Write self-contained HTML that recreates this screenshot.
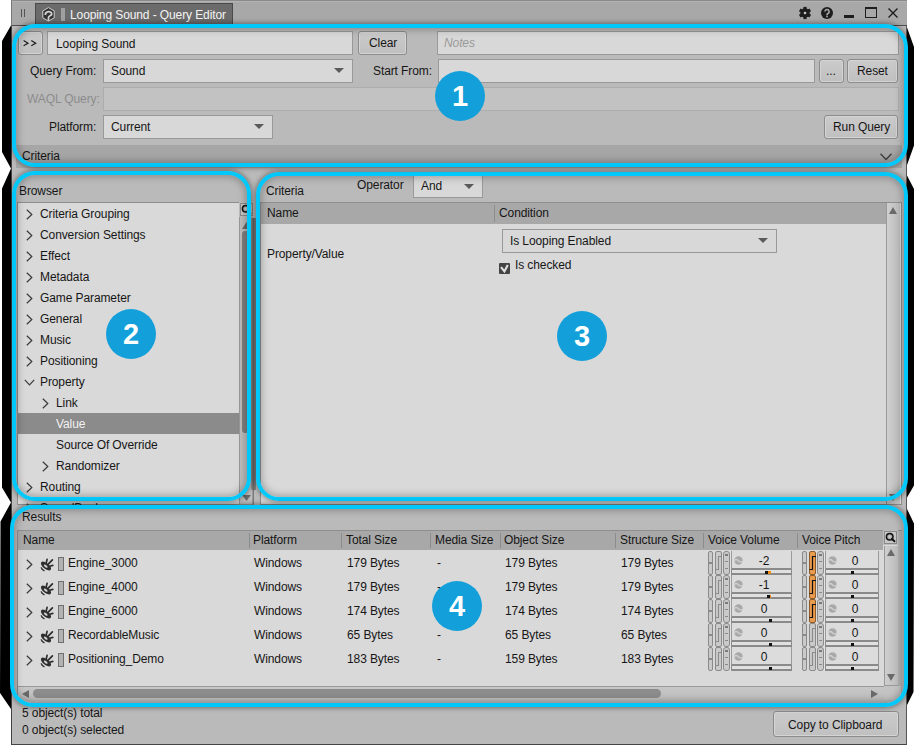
<!DOCTYPE html>
<html><head><meta charset="utf-8"><style>
*{box-sizing:border-box;margin:0;padding:0}
html,body{width:915px;height:745px;overflow:hidden;background:#fff}
body{position:relative;font-family:"Liberation Sans",sans-serif;font-size:12px;color:#161616}
.a{position:absolute}
.t{position:absolute;white-space:nowrap;line-height:14px;letter-spacing:-0.1px}
.box{position:absolute;background:#d8d8d8;border:1px solid #999}
.btn{position:absolute;background:linear-gradient(#cbcbcb,#c0c0c0);border:1px solid #8c8c8c;border-radius:3px;box-shadow:inset 0 0 0 1px #d4d4d4}
.dd{position:absolute;background:#d8d8d8;border:1px solid #999}
.dd:after{content:"";position:absolute;right:8px;top:8px;border-left:5px solid transparent;border-right:5px solid transparent;border-top:5px solid #5a5a5a}
.ring{position:absolute;border:4px solid #00c8fa;border-radius:23px;box-shadow:0 0 5px 1px rgba(0,0,0,.4),inset 0 0 7px 2px rgba(0,0,0,.25)}
.num{position:absolute;width:50px;height:50px;border-radius:25px;background:#139fd9;color:#fff;font-weight:bold;font-size:29px;line-height:51px;text-align:center}
.hdr{position:absolute;background:#a8a8a8}
.sep{position:absolute;width:1px;background:#8c8c8c}
svg{position:absolute;overflow:visible}
</style></head><body>
<svg style="left:0;top:0" width="915" height="745"><polygon fill="#000" points="11,25.5 2,41 2,152 11,168.5 2,188.5 2,487.5 11,502.5 0.5,521.5 0,693 11,709"/><polygon fill="#000" points="907,27.5 914,47 914,145.5 907,165 907,175.5 914,189 914,485.5 907,497.5 907,509 914,523.5 913.5,692 907,705"/></svg>
<div class="a" style="left:11px;top:0px;width:896px;height:745px;background:#bababa;border-left:1px solid #444;border-right:1px solid #555;border-bottom:1px solid #444;"></div>
<div class="a" style="left:11px;top:0px;width:896px;height:26px;background:#a8a8a8;border-bottom:1px solid #4e4e4e;border-left:1px solid #777;"></div>
<div class="a" style="left:11px;top:0px;width:896px;height:1px;background:#8a8a8a;"></div>
<div class="a" style="left:12px;top:1px;width:894px;height:1px;background:#b4b4b4;"></div>
<div class="a" style="left:21px;top:9px;width:1px;height:8px;background:#555"></div>
<div class="a" style="left:24px;top:9px;width:1px;height:8px;background:#555"></div>
<div class="a" style="left:35px;top:3px;width:198px;height:23px;background:#6b6b6b;border:1px solid #4a4a4a;border-bottom:none;"></div>
<svg style="left:42px;top:7px" width="13" height="15"><polygon points="6.5,0.6 12.2,3.9 12.2,10.8 6.5,14.1 0.8,10.8 0.8,3.9" fill="#333" stroke="#cfcfcf" stroke-width="1"/><path d="M3.3,8 C3.3,3.9 9.7,3.7 9.7,6.9 C9.7,8.7 6.5,8.9 6.5,10.6 L6.5,14" fill="none" stroke="#d2d2d2" stroke-width="1.8"/></svg>
<div class="a" style="left:61px;top:8px;width:4px;height:13px;background:#a0a0a0"></div>
<div class="t" style="left:70px;top:8px;color:#f4f4f4;">Looping Sound - Query Editor</div>
<svg style="left:799px;top:7px" width="12" height="12"><g fill="#1e1e1e"><circle cx="6" cy="6" r="4.7"/><rect x="4.4" y="-0.1" width="3.2" height="3" transform="rotate(0 6 6)"/><rect x="4.4" y="-0.1" width="3.2" height="3" transform="rotate(60 6 6)"/><rect x="4.4" y="-0.1" width="3.2" height="3" transform="rotate(120 6 6)"/><rect x="4.4" y="-0.1" width="3.2" height="3" transform="rotate(180 6 6)"/><rect x="4.4" y="-0.1" width="3.2" height="3" transform="rotate(240 6 6)"/><rect x="4.4" y="-0.1" width="3.2" height="3" transform="rotate(300 6 6)"/></g><circle cx="6" cy="6" r="1.3" fill="#c8c8c8"/></svg>
<svg style="left:821px;top:7px" width="12" height="12"><circle cx="6" cy="6" r="6" fill="#1e1e1e"/><path d="M3.9,4.6 a2.1,2.1 0 1 1 3,1.9 q-0.9,0.4 -0.9,1.4" fill="none" stroke="#a8a8a8" stroke-width="1.6"/><rect x="5.2" y="8.6" width="1.7" height="1.7" fill="#a8a8a8"/></svg>
<div class="a" style="left:844px;top:15px;width:10px;height:3px;background:#1e1e1e"></div>
<div class="a" style="left:865px;top:7px;width:12px;height:11px;border:1px solid #1e1e1e;border-top:2px solid #1e1e1e"></div>
<svg style="left:888px;top:8px" width="10" height="10"><path d="M0.5,0.5 L9.5,9.5 M9.5,0.5 L0.5,9.5" stroke="#1e1e1e" stroke-width="1.4"/></svg>
<div class="btn" style="left:18px;top:31px;width:25px;height:24px;"></div>
<svg style="left:23px;top:40px" width="14" height="7"><path d="M0.6,0.6 L5,3.2 L0.6,5.8 M8.3,0.6 L12.7,3.2 L8.3,5.8" fill="none" stroke="#1e1e1e" stroke-width="1.2"/></svg>
<div class="box" style="left:47px;top:31px;width:306px;height:24px;"></div>
<div class="t" style="left:56px;top:37px;">Looping Sound</div>
<div class="btn" style="left:358px;top:31px;width:49px;height:24px;"></div>
<div class="t" style="left:369px;top:36px;">Clear</div>
<div class="box" style="left:437px;top:31px;width:462px;height:24px;"></div>
<div class="t" style="left:444px;top:36px;color:#9a9a9a;font-style:italic;">Notes</div>
<div class="t" style="left:30px;top:64px;">Query From:</div>
<div class="dd" style="left:103px;top:59px;width:250px;height:24px;"></div>
<div class="t" style="left:111px;top:64px;">Sound</div>
<div class="t" style="left:373px;top:64px;">Start From:</div>
<div class="box" style="left:438px;top:59px;width:377px;height:24px;"></div>
<div class="btn" style="left:819px;top:59px;width:25px;height:24px;"></div>
<div class="t" style="left:826px;top:64px;">...</div>
<div class="btn" style="left:847px;top:59px;width:51px;height:24px;"></div>
<div class="t" style="left:857px;top:64px;">Reset</div>
<div class="t" style="left:27px;top:92px;color:#8c8c8c;">WAQL Query:</div>
<div class="a" style="left:103px;top:87px;width:796px;height:24px;background:#c2c2c2;border:1px solid #adadad;"></div>
<div class="t" style="left:49px;top:120px;">Platform:</div>
<div class="dd" style="left:103px;top:115px;width:170px;height:24px;"></div>
<div class="t" style="left:111px;top:120px;">Current</div>
<div class="btn" style="left:824px;top:115px;width:74px;height:24px;"></div>
<div class="t" style="left:833px;top:120px;">Run Query</div>
<div class="a" style="left:16px;top:145px;width:886px;height:23px;background:#a6a6a6;"></div>
<div class="t" style="left:22px;top:149px;">Criteria</div>
<svg style="left:880px;top:153px" width="12" height="8"><path d="M0.5,0.8 L6,6.5 L11.5,0.8" fill="none" stroke="#3e3e3e" stroke-width="1.3"/></svg>
<div class="t" style="left:19px;top:184px;">Browser</div>
<div class="a" style="left:17px;top:202px;width:223px;height:303px;background:#d9d9d9;border:1px solid #8e8e8e;border-right:none;"></div>
<div class="a" style="left:0;top:0;width:915px;height:505px;overflow:hidden">
<svg style="left:26px;top:209px" width="7" height="11"><path d="M0.8,0.8 L5.8,5.5 L0.8,10.2" fill="none" stroke="#3a3a3a" stroke-width="1.2"/></svg>
<div class="t" style="left:40px;top:207px;">Criteria Grouping</div>
<svg style="left:26px;top:230px" width="7" height="11"><path d="M0.8,0.8 L5.8,5.5 L0.8,10.2" fill="none" stroke="#3a3a3a" stroke-width="1.2"/></svg>
<div class="t" style="left:40px;top:228px;">Conversion Settings</div>
<svg style="left:26px;top:251px" width="7" height="11"><path d="M0.8,0.8 L5.8,5.5 L0.8,10.2" fill="none" stroke="#3a3a3a" stroke-width="1.2"/></svg>
<div class="t" style="left:40px;top:249px;">Effect</div>
<svg style="left:26px;top:272px" width="7" height="11"><path d="M0.8,0.8 L5.8,5.5 L0.8,10.2" fill="none" stroke="#3a3a3a" stroke-width="1.2"/></svg>
<div class="t" style="left:40px;top:270px;">Metadata</div>
<svg style="left:26px;top:293px" width="7" height="11"><path d="M0.8,0.8 L5.8,5.5 L0.8,10.2" fill="none" stroke="#3a3a3a" stroke-width="1.2"/></svg>
<div class="t" style="left:40px;top:291px;">Game Parameter</div>
<svg style="left:26px;top:314px" width="7" height="11"><path d="M0.8,0.8 L5.8,5.5 L0.8,10.2" fill="none" stroke="#3a3a3a" stroke-width="1.2"/></svg>
<div class="t" style="left:40px;top:312px;">General</div>
<svg style="left:26px;top:335px" width="7" height="11"><path d="M0.8,0.8 L5.8,5.5 L0.8,10.2" fill="none" stroke="#3a3a3a" stroke-width="1.2"/></svg>
<div class="t" style="left:40px;top:333px;">Music</div>
<svg style="left:26px;top:356px" width="7" height="11"><path d="M0.8,0.8 L5.8,5.5 L0.8,10.2" fill="none" stroke="#3a3a3a" stroke-width="1.2"/></svg>
<div class="t" style="left:40px;top:354px;">Positioning</div>
<svg style="left:24px;top:379px" width="11" height="7"><path d="M0.8,0.8 L5.5,5.8 L10.2,0.8" fill="none" stroke="#3a3a3a" stroke-width="1.2"/></svg>
<div class="t" style="left:40px;top:375px;">Property</div>
<svg style="left:42px;top:398px" width="7" height="11"><path d="M0.8,0.8 L5.8,5.5 L0.8,10.2" fill="none" stroke="#3a3a3a" stroke-width="1.2"/></svg>
<div class="t" style="left:56px;top:396px;">Link</div>
<div class="a" style="left:18px;top:413px;width:221px;height:21px;background:#8b8b8b;"></div>
<div class="t" style="left:56px;top:417px;color:#f2f2f2;">Value</div>
<div class="t" style="left:56px;top:438px;">Source Of Override</div>
<svg style="left:42px;top:461px" width="7" height="11"><path d="M0.8,0.8 L5.8,5.5 L0.8,10.2" fill="none" stroke="#3a3a3a" stroke-width="1.2"/></svg>
<div class="t" style="left:56px;top:459px;">Randomizer</div>
<svg style="left:26px;top:482px" width="7" height="11"><path d="M0.8,0.8 L5.8,5.5 L0.8,10.2" fill="none" stroke="#3a3a3a" stroke-width="1.2"/></svg>
<div class="t" style="left:40px;top:480px;">Routing</div>
<svg style="left:26px;top:503px" width="7" height="11"><path d="M0.8,0.8 L5.8,5.5 L0.8,10.2" fill="none" stroke="#3a3a3a" stroke-width="1.2"/></svg>
<div class="t" style="left:40px;top:501px;">SoundBank</div>
</div>
<div class="a" style="left:239px;top:202px;width:14px;height:303px;background:#bdbdbd;border-left:1px solid #999;border-right:1px solid #999;border-bottom:1px solid #999;"></div>
<div class="a" style="left:239px;top:202px;width:15px;height:15px;background:#c9c9c9;border:1px solid #bdbdbd;box-shadow:inset 0 0 0 1px #8a8a8a;"></div>
<svg style="left:241px;top:204px" width="11" height="11"><circle cx="4.7" cy="4.7" r="3.3" fill="url(#mg)" stroke="#111" stroke-width="1.5"/><path d="M7,7 L9.4,9.2" stroke="#111" stroke-width="2" stroke-linecap="round"/></svg>
<svg style="left:242px;top:222px" width="9" height="7"><polygon points="4.5,0 9,7 0,7" fill="#6a6a6a"/></svg>
<div class="a" style="left:242px;top:231px;width:8px;height:202px;background:#808080;border-radius:3px;"></div>
<div class="a" style="left:251px;top:218px;width:5px;height:272px;background:linear-gradient(90deg,#9a9a9a,#6a6a6a 50%,#8a8a8a);"></div>
<div class="a" style="left:253px;top:490px;width:1px;height:15px;background:#7a7a7a;"></div>
<svg style="left:242px;top:495px" width="9" height="6"><polygon points="0,0 9,0 4.5,6" fill="#6a6a6a"/></svg>
<div class="t" style="left:266px;top:184px;">Criteria</div>
<div class="t" style="left:357px;top:178px;">Operator</div>
<div class="dd" style="left:413px;top:175px;width:70px;height:23px;"></div>
<div class="t" style="left:421px;top:179px;">And</div>
<div class="a" style="left:260px;top:202px;width:642px;height:303px;background:#d9d9d9;border:1px solid #8e8e8e;"></div>
<div class="hdr" style="left:261px;top:203px;width:625px;height:21px;"></div>
<div class="sep" style="left:494px;top:205px;width:1px;height:17px;"></div>
<div class="t" style="left:267px;top:206px;">Name</div>
<div class="t" style="left:499px;top:206px;">Condition</div>
<div class="t" style="left:267px;top:247px;">Property/Value</div>
<div class="dd" style="left:502px;top:229px;width:275px;height:24px;"></div>
<div class="t" style="left:510px;top:234px;">Is Looping Enabled</div>
<div class="a" style="left:499px;top:263px;width:11px;height:11px;background:#444;border-radius:1px;"></div>
<svg style="left:499px;top:263px" width="11" height="11"><path d="M2,4.2 L5.4,8.4 L8.8,2" fill="none" stroke="#e2e2e2" stroke-width="2.1"/></svg>
<div class="t" style="left:515px;top:258px;">Is checked</div>
<div class="a" style="left:886px;top:203px;width:14px;height:301px;background:linear-gradient(90deg,#cfcfcf,#bcbcbc);border-left:1px solid #999;"></div>
<svg style="left:889px;top:494px" width="8" height="7"><polygon points="0,0 8,0 4,7" fill="#6a6a6a"/></svg>
<svg style="left:889px;top:207px" width="8" height="7"><polygon points="4,0 8,7 0,7" fill="#6a6a6a"/></svg>
<div class="t" style="left:22px;top:510px;">Results</div>
<div class="a" style="left:17px;top:530px;width:885px;height:170px;background:#d9d9d9;border:1px solid #8e8e8e;"></div>
<div class="hdr" style="left:18px;top:531px;width:865px;height:19px;"></div>
<div class="t" style="left:23px;top:533px;">Name</div>
<div class="t" style="left:253px;top:533px;">Platform</div>
<div class="t" style="left:346px;top:533px;">Total Size</div>
<div class="t" style="left:435px;top:533px;">Media Size</div>
<div class="t" style="left:504px;top:533px;">Object Size</div>
<div class="t" style="left:620px;top:533px;">Structure Size</div>
<div class="t" style="left:708px;top:533px;">Voice Volume</div>
<div class="t" style="left:802px;top:533px;">Voice Pitch</div>
<div class="sep" style="left:249px;top:533px;width:1px;height:15px;"></div>
<div class="sep" style="left:341px;top:533px;width:1px;height:15px;"></div>
<div class="sep" style="left:430px;top:533px;width:1px;height:15px;"></div>
<div class="sep" style="left:500px;top:533px;width:1px;height:15px;"></div>
<div class="sep" style="left:615px;top:533px;width:1px;height:15px;"></div>
<div class="sep" style="left:703px;top:533px;width:1px;height:15px;"></div>
<div class="sep" style="left:797px;top:533px;width:1px;height:15px;"></div>
<svg style="left:26px;top:559px" width="7" height="11"><path d="M0.8,0.8 L5.8,5.5 L0.8,10.2" fill="none" stroke="#3a3a3a" stroke-width="1.2"/></svg>
<svg style="left:40px;top:558px" width="15" height="15"><path d="M6.3,4.6 L7.1,1.4 M8.2,6.2 L12.4,1.8 M9.6,8.2 L12.8,7.4" stroke="#2e2e2e" stroke-width="1.7" stroke-linecap="round"/><ellipse cx="6" cy="8" rx="6.1" ry="2.9" transform="rotate(39 6 8)" fill="#2e2e2e"/><ellipse cx="5.7" cy="8.1" rx="2.3" ry="1.0" transform="rotate(39 5.7 8.1)" fill="#d0d0d0"/><path d="M1.1,9.4 Q1.8,11.9 4.5,12.9" fill="none" stroke="#2e2e2e" stroke-width="1.4"/></svg>
<div class="a" style="left:58px;top:557px;width:6px;height:14px;background:#b2b2b2;border:1px solid #707070;"></div>
<div class="t" style="left:68px;top:556px;">Engine_3000</div>
<div class="t" style="left:254px;top:556px;">Windows</div>
<div class="t" style="left:347px;top:556px;">179 Bytes</div>
<div class="t" style="left:437px;top:556px;">-</div>
<div class="t" style="left:505px;top:556px;">179 Bytes</div>
<div class="t" style="left:621px;top:556px;">179 Bytes</div>
<div class="a" style="left:708px;top:551px;width:5px;height:24px;background:#cacaca;border:1px solid #8a8a8a;border-radius:2px;"></div>
<div class="a" style="left:708px;top:562px;width:5px;height:2px;background:#8a8a8a;"></div>
<div class="a" style="left:715px;top:551px;width:7px;height:24px;background:#cacaca;border:1px solid #8a8a8a;border-radius:2px;"></div>
<svg style="left:715px;top:551px" width="7" height="24"><path d="M6,5.5 L3.5,5.5 L3.5,18.5 L1,18.5" fill="none" stroke="#8a8a8a" stroke-width="1.1"/></svg>
<div class="a" style="left:723px;top:551px;width:7px;height:24px;background:#cacaca;border:1px solid #8a8a8a;border-radius:3px;"></div>
<div class="a" style="left:725px;top:554px;width:3px;height:2px;background:#7a7a7a;"></div>
<div class="a" style="left:725px;top:561px;width:3px;height:1px;background:#8a8a8a;"></div>
<div class="a" style="left:725px;top:568px;width:3px;height:1px;background:#8a8a8a;"></div>
<div class="a" style="left:730px;top:551px;width:1px;height:24px;background:#e4e4e4;"></div>
<div class="a" style="left:731px;top:551px;width:61px;height:19px;background:#dcdcdc;border:1px solid #9a9a9a;border-bottom:2px solid #8a8a8a;border-top:none;"></div>
<svg style="left:734px;top:556px" width="9" height="9"><circle cx="4.5" cy="4.5" r="4.2" fill="#a9a9a9"/><path d="M0,4.8 q2.2,-2.4 4.5,0 q2.3,2.4 4.5,0" fill="none" stroke="#d6d6d6" stroke-width="1.1"/></svg>
<div class="t" style="left:734px;top:554px;width:60px;text-align:center">-2</div>
<div class="a" style="left:731px;top:570px;width:61px;height:5px;background:#e0e0e0;border:1px solid #8a8a8a;border-top:none;border-bottom:2px solid #8a8a8a;"></div>
<div class="a" style="left:765px;top:571px;width:3px;height:3px;background:#111;"></div>
<div class="a" style="left:768px;top:571px;width:3px;height:3px;background:#f08c10;"></div>
<div class="a" style="left:802px;top:551px;width:5px;height:24px;background:#cacaca;border:1px solid #8a8a8a;border-radius:2px;"></div>
<div class="a" style="left:802px;top:562px;width:5px;height:2px;background:#8a8a8a;"></div>
<div class="a" style="left:809px;top:551px;width:7px;height:24px;background:#e99a4c;border:1px solid #8a5a2a;border-radius:2px;"></div>
<svg style="left:809px;top:551px" width="7" height="24"><path d="M7,5.5 L3.5,5.5 L3.5,18.5 L0.5,18.5" fill="none" stroke="#111" stroke-width="1.2"/></svg>
<div class="a" style="left:817px;top:551px;width:7px;height:24px;background:#cacaca;border:1px solid #8a8a8a;border-radius:3px;"></div>
<div class="a" style="left:819px;top:554px;width:3px;height:2px;background:#7a7a7a;"></div>
<div class="a" style="left:819px;top:561px;width:3px;height:1px;background:#8a8a8a;"></div>
<div class="a" style="left:819px;top:568px;width:3px;height:1px;background:#8a8a8a;"></div>
<div class="a" style="left:824px;top:551px;width:1px;height:24px;background:#e4e4e4;"></div>
<div class="a" style="left:825px;top:551px;width:54px;height:19px;background:#dcdcdc;border:1px solid #9a9a9a;border-bottom:2px solid #8a8a8a;border-top:none;"></div>
<svg style="left:828px;top:556px" width="9" height="9"><circle cx="4.5" cy="4.5" r="4.2" fill="#a9a9a9"/><path d="M0,4.8 q2.2,-2.4 4.5,0 q2.3,2.4 4.5,0" fill="none" stroke="#d6d6d6" stroke-width="1.1"/></svg>
<div class="t" style="left:825px;top:554px;width:60px;text-align:center">0</div>
<div class="a" style="left:825px;top:570px;width:54px;height:5px;background:#e0e0e0;border:1px solid #8a8a8a;border-top:none;border-bottom:2px solid #8a8a8a;"></div>
<div class="a" style="left:851px;top:571px;width:3px;height:3px;background:#111;"></div>
<svg style="left:26px;top:583px" width="7" height="11"><path d="M0.8,0.8 L5.8,5.5 L0.8,10.2" fill="none" stroke="#3a3a3a" stroke-width="1.2"/></svg>
<svg style="left:40px;top:582px" width="15" height="15"><path d="M6.3,4.6 L7.1,1.4 M8.2,6.2 L12.4,1.8 M9.6,8.2 L12.8,7.4" stroke="#2e2e2e" stroke-width="1.7" stroke-linecap="round"/><ellipse cx="6" cy="8" rx="6.1" ry="2.9" transform="rotate(39 6 8)" fill="#2e2e2e"/><ellipse cx="5.7" cy="8.1" rx="2.3" ry="1.0" transform="rotate(39 5.7 8.1)" fill="#d0d0d0"/><path d="M1.1,9.4 Q1.8,11.9 4.5,12.9" fill="none" stroke="#2e2e2e" stroke-width="1.4"/></svg>
<div class="a" style="left:58px;top:581px;width:6px;height:14px;background:#b2b2b2;border:1px solid #707070;"></div>
<div class="t" style="left:68px;top:580px;">Engine_4000</div>
<div class="t" style="left:254px;top:580px;">Windows</div>
<div class="t" style="left:347px;top:580px;">179 Bytes</div>
<div class="t" style="left:437px;top:580px;">-</div>
<div class="t" style="left:505px;top:580px;">179 Bytes</div>
<div class="t" style="left:621px;top:580px;">179 Bytes</div>
<div class="a" style="left:708px;top:575px;width:5px;height:24px;background:#cacaca;border:1px solid #8a8a8a;border-radius:2px;"></div>
<div class="a" style="left:708px;top:586px;width:5px;height:2px;background:#8a8a8a;"></div>
<div class="a" style="left:715px;top:575px;width:7px;height:24px;background:#cacaca;border:1px solid #8a8a8a;border-radius:2px;"></div>
<svg style="left:715px;top:575px" width="7" height="24"><path d="M6,5.5 L3.5,5.5 L3.5,18.5 L1,18.5" fill="none" stroke="#8a8a8a" stroke-width="1.1"/></svg>
<div class="a" style="left:723px;top:575px;width:7px;height:24px;background:#cacaca;border:1px solid #8a8a8a;border-radius:3px;"></div>
<div class="a" style="left:725px;top:578px;width:3px;height:2px;background:#7a7a7a;"></div>
<div class="a" style="left:725px;top:585px;width:3px;height:1px;background:#8a8a8a;"></div>
<div class="a" style="left:725px;top:592px;width:3px;height:1px;background:#8a8a8a;"></div>
<div class="a" style="left:730px;top:575px;width:1px;height:24px;background:#e4e4e4;"></div>
<div class="a" style="left:731px;top:575px;width:61px;height:19px;background:#dcdcdc;border:1px solid #9a9a9a;border-bottom:2px solid #8a8a8a;border-top:none;"></div>
<svg style="left:734px;top:580px" width="9" height="9"><circle cx="4.5" cy="4.5" r="4.2" fill="#a9a9a9"/><path d="M0,4.8 q2.2,-2.4 4.5,0 q2.3,2.4 4.5,0" fill="none" stroke="#d6d6d6" stroke-width="1.1"/></svg>
<div class="t" style="left:734px;top:578px;width:60px;text-align:center">-1</div>
<div class="a" style="left:731px;top:594px;width:61px;height:5px;background:#e0e0e0;border:1px solid #8a8a8a;border-top:none;border-bottom:2px solid #8a8a8a;"></div>
<div class="a" style="left:767px;top:595px;width:3px;height:3px;background:#111;"></div>
<div class="a" style="left:770px;top:595px;width:1px;height:3px;background:#f08c10;"></div>
<div class="a" style="left:802px;top:575px;width:5px;height:24px;background:#cacaca;border:1px solid #8a8a8a;border-radius:2px;"></div>
<div class="a" style="left:802px;top:586px;width:5px;height:2px;background:#8a8a8a;"></div>
<div class="a" style="left:809px;top:575px;width:7px;height:24px;background:#e99a4c;border:1px solid #8a5a2a;border-radius:2px;"></div>
<svg style="left:809px;top:575px" width="7" height="24"><path d="M7,5.5 L3.5,5.5 L3.5,18.5 L0.5,18.5" fill="none" stroke="#111" stroke-width="1.2"/></svg>
<div class="a" style="left:817px;top:575px;width:7px;height:24px;background:#cacaca;border:1px solid #8a8a8a;border-radius:3px;"></div>
<div class="a" style="left:819px;top:578px;width:3px;height:2px;background:#7a7a7a;"></div>
<div class="a" style="left:819px;top:585px;width:3px;height:1px;background:#8a8a8a;"></div>
<div class="a" style="left:819px;top:592px;width:3px;height:1px;background:#8a8a8a;"></div>
<div class="a" style="left:824px;top:575px;width:1px;height:24px;background:#e4e4e4;"></div>
<div class="a" style="left:825px;top:575px;width:54px;height:19px;background:#dcdcdc;border:1px solid #9a9a9a;border-bottom:2px solid #8a8a8a;border-top:none;"></div>
<svg style="left:828px;top:580px" width="9" height="9"><circle cx="4.5" cy="4.5" r="4.2" fill="#a9a9a9"/><path d="M0,4.8 q2.2,-2.4 4.5,0 q2.3,2.4 4.5,0" fill="none" stroke="#d6d6d6" stroke-width="1.1"/></svg>
<div class="t" style="left:825px;top:578px;width:60px;text-align:center">0</div>
<div class="a" style="left:825px;top:594px;width:54px;height:5px;background:#e0e0e0;border:1px solid #8a8a8a;border-top:none;border-bottom:2px solid #8a8a8a;"></div>
<div class="a" style="left:851px;top:595px;width:3px;height:3px;background:#111;"></div>
<svg style="left:26px;top:607px" width="7" height="11"><path d="M0.8,0.8 L5.8,5.5 L0.8,10.2" fill="none" stroke="#3a3a3a" stroke-width="1.2"/></svg>
<svg style="left:40px;top:606px" width="15" height="15"><path d="M6.3,4.6 L7.1,1.4 M8.2,6.2 L12.4,1.8 M9.6,8.2 L12.8,7.4" stroke="#2e2e2e" stroke-width="1.7" stroke-linecap="round"/><ellipse cx="6" cy="8" rx="6.1" ry="2.9" transform="rotate(39 6 8)" fill="#2e2e2e"/><ellipse cx="5.7" cy="8.1" rx="2.3" ry="1.0" transform="rotate(39 5.7 8.1)" fill="#d0d0d0"/><path d="M1.1,9.4 Q1.8,11.9 4.5,12.9" fill="none" stroke="#2e2e2e" stroke-width="1.4"/></svg>
<div class="a" style="left:58px;top:605px;width:6px;height:14px;background:#b2b2b2;border:1px solid #707070;"></div>
<div class="t" style="left:68px;top:604px;">Engine_6000</div>
<div class="t" style="left:254px;top:604px;">Windows</div>
<div class="t" style="left:347px;top:604px;">174 Bytes</div>
<div class="t" style="left:437px;top:604px;">-</div>
<div class="t" style="left:505px;top:604px;">174 Bytes</div>
<div class="t" style="left:621px;top:604px;">174 Bytes</div>
<div class="a" style="left:708px;top:599px;width:5px;height:24px;background:#cacaca;border:1px solid #8a8a8a;border-radius:2px;"></div>
<div class="a" style="left:708px;top:610px;width:5px;height:2px;background:#8a8a8a;"></div>
<div class="a" style="left:715px;top:599px;width:7px;height:24px;background:#cacaca;border:1px solid #8a8a8a;border-radius:2px;"></div>
<svg style="left:715px;top:599px" width="7" height="24"><path d="M6,5.5 L3.5,5.5 L3.5,18.5 L1,18.5" fill="none" stroke="#8a8a8a" stroke-width="1.1"/></svg>
<div class="a" style="left:723px;top:599px;width:7px;height:24px;background:#cacaca;border:1px solid #8a8a8a;border-radius:3px;"></div>
<div class="a" style="left:725px;top:602px;width:3px;height:2px;background:#7a7a7a;"></div>
<div class="a" style="left:725px;top:609px;width:3px;height:1px;background:#8a8a8a;"></div>
<div class="a" style="left:725px;top:616px;width:3px;height:1px;background:#8a8a8a;"></div>
<div class="a" style="left:730px;top:599px;width:1px;height:24px;background:#e4e4e4;"></div>
<div class="a" style="left:731px;top:599px;width:61px;height:19px;background:#dcdcdc;border:1px solid #9a9a9a;border-bottom:2px solid #8a8a8a;border-top:none;"></div>
<svg style="left:734px;top:604px" width="9" height="9"><circle cx="4.5" cy="4.5" r="4.2" fill="#a9a9a9"/><path d="M0,4.8 q2.2,-2.4 4.5,0 q2.3,2.4 4.5,0" fill="none" stroke="#d6d6d6" stroke-width="1.1"/></svg>
<div class="t" style="left:734px;top:602px;width:60px;text-align:center">0</div>
<div class="a" style="left:731px;top:618px;width:61px;height:5px;background:#e0e0e0;border:1px solid #8a8a8a;border-top:none;border-bottom:2px solid #8a8a8a;"></div>
<div class="a" style="left:769px;top:619px;width:3px;height:3px;background:#111;"></div>
<div class="a" style="left:802px;top:599px;width:5px;height:24px;background:#cacaca;border:1px solid #8a8a8a;border-radius:2px;"></div>
<div class="a" style="left:802px;top:610px;width:5px;height:2px;background:#8a8a8a;"></div>
<div class="a" style="left:809px;top:599px;width:7px;height:24px;background:#e99a4c;border:1px solid #8a5a2a;border-radius:2px;"></div>
<svg style="left:809px;top:599px" width="7" height="24"><path d="M7,5.5 L3.5,5.5 L3.5,18.5 L0.5,18.5" fill="none" stroke="#111" stroke-width="1.2"/></svg>
<div class="a" style="left:817px;top:599px;width:7px;height:24px;background:#cacaca;border:1px solid #8a8a8a;border-radius:3px;"></div>
<div class="a" style="left:819px;top:602px;width:3px;height:2px;background:#7a7a7a;"></div>
<div class="a" style="left:819px;top:609px;width:3px;height:1px;background:#8a8a8a;"></div>
<div class="a" style="left:819px;top:616px;width:3px;height:1px;background:#8a8a8a;"></div>
<div class="a" style="left:824px;top:599px;width:1px;height:24px;background:#e4e4e4;"></div>
<div class="a" style="left:825px;top:599px;width:54px;height:19px;background:#dcdcdc;border:1px solid #9a9a9a;border-bottom:2px solid #8a8a8a;border-top:none;"></div>
<svg style="left:828px;top:604px" width="9" height="9"><circle cx="4.5" cy="4.5" r="4.2" fill="#a9a9a9"/><path d="M0,4.8 q2.2,-2.4 4.5,0 q2.3,2.4 4.5,0" fill="none" stroke="#d6d6d6" stroke-width="1.1"/></svg>
<div class="t" style="left:825px;top:602px;width:60px;text-align:center">0</div>
<div class="a" style="left:825px;top:618px;width:54px;height:5px;background:#e0e0e0;border:1px solid #8a8a8a;border-top:none;border-bottom:2px solid #8a8a8a;"></div>
<div class="a" style="left:851px;top:619px;width:3px;height:3px;background:#111;"></div>
<svg style="left:26px;top:631px" width="7" height="11"><path d="M0.8,0.8 L5.8,5.5 L0.8,10.2" fill="none" stroke="#3a3a3a" stroke-width="1.2"/></svg>
<svg style="left:40px;top:630px" width="15" height="15"><path d="M6.3,4.6 L7.1,1.4 M8.2,6.2 L12.4,1.8 M9.6,8.2 L12.8,7.4" stroke="#2e2e2e" stroke-width="1.7" stroke-linecap="round"/><ellipse cx="6" cy="8" rx="6.1" ry="2.9" transform="rotate(39 6 8)" fill="#2e2e2e"/><ellipse cx="5.7" cy="8.1" rx="2.3" ry="1.0" transform="rotate(39 5.7 8.1)" fill="#d0d0d0"/><path d="M1.1,9.4 Q1.8,11.9 4.5,12.9" fill="none" stroke="#2e2e2e" stroke-width="1.4"/></svg>
<div class="a" style="left:58px;top:629px;width:6px;height:14px;background:#b2b2b2;border:1px solid #707070;"></div>
<div class="t" style="left:68px;top:628px;">RecordableMusic</div>
<div class="t" style="left:254px;top:628px;">Windows</div>
<div class="t" style="left:347px;top:628px;">65 Bytes</div>
<div class="t" style="left:437px;top:628px;">-</div>
<div class="t" style="left:505px;top:628px;">65 Bytes</div>
<div class="t" style="left:621px;top:628px;">65 Bytes</div>
<div class="a" style="left:708px;top:623px;width:5px;height:24px;background:#cacaca;border:1px solid #8a8a8a;border-radius:2px;"></div>
<div class="a" style="left:708px;top:634px;width:5px;height:2px;background:#8a8a8a;"></div>
<div class="a" style="left:715px;top:623px;width:7px;height:24px;background:#cacaca;border:1px solid #8a8a8a;border-radius:2px;"></div>
<svg style="left:715px;top:623px" width="7" height="24"><path d="M6,5.5 L3.5,5.5 L3.5,18.5 L1,18.5" fill="none" stroke="#8a8a8a" stroke-width="1.1"/></svg>
<div class="a" style="left:723px;top:623px;width:7px;height:24px;background:#cacaca;border:1px solid #8a8a8a;border-radius:3px;"></div>
<div class="a" style="left:725px;top:626px;width:3px;height:2px;background:#7a7a7a;"></div>
<div class="a" style="left:725px;top:633px;width:3px;height:1px;background:#8a8a8a;"></div>
<div class="a" style="left:725px;top:640px;width:3px;height:1px;background:#8a8a8a;"></div>
<div class="a" style="left:730px;top:623px;width:1px;height:24px;background:#e4e4e4;"></div>
<div class="a" style="left:731px;top:623px;width:61px;height:19px;background:#dcdcdc;border:1px solid #9a9a9a;border-bottom:2px solid #8a8a8a;border-top:none;"></div>
<svg style="left:734px;top:628px" width="9" height="9"><circle cx="4.5" cy="4.5" r="4.2" fill="#a9a9a9"/><path d="M0,4.8 q2.2,-2.4 4.5,0 q2.3,2.4 4.5,0" fill="none" stroke="#d6d6d6" stroke-width="1.1"/></svg>
<div class="t" style="left:734px;top:626px;width:60px;text-align:center">0</div>
<div class="a" style="left:731px;top:642px;width:61px;height:5px;background:#e0e0e0;border:1px solid #8a8a8a;border-top:none;border-bottom:2px solid #8a8a8a;"></div>
<div class="a" style="left:769px;top:643px;width:3px;height:3px;background:#111;"></div>
<div class="a" style="left:802px;top:623px;width:5px;height:24px;background:#cacaca;border:1px solid #8a8a8a;border-radius:2px;"></div>
<div class="a" style="left:802px;top:634px;width:5px;height:2px;background:#8a8a8a;"></div>
<div class="a" style="left:809px;top:623px;width:7px;height:24px;background:#cacaca;border:1px solid #8a8a8a;border-radius:2px;"></div>
<svg style="left:809px;top:623px" width="7" height="24"><path d="M6,5.5 L3.5,5.5 L3.5,18.5 L1,18.5" fill="none" stroke="#8a8a8a" stroke-width="1.1"/></svg>
<div class="a" style="left:817px;top:623px;width:7px;height:24px;background:#cacaca;border:1px solid #8a8a8a;border-radius:3px;"></div>
<div class="a" style="left:819px;top:626px;width:3px;height:2px;background:#7a7a7a;"></div>
<div class="a" style="left:819px;top:633px;width:3px;height:1px;background:#8a8a8a;"></div>
<div class="a" style="left:819px;top:640px;width:3px;height:1px;background:#8a8a8a;"></div>
<div class="a" style="left:824px;top:623px;width:1px;height:24px;background:#e4e4e4;"></div>
<div class="a" style="left:825px;top:623px;width:54px;height:19px;background:#dcdcdc;border:1px solid #9a9a9a;border-bottom:2px solid #8a8a8a;border-top:none;"></div>
<svg style="left:828px;top:628px" width="9" height="9"><circle cx="4.5" cy="4.5" r="4.2" fill="#a9a9a9"/><path d="M0,4.8 q2.2,-2.4 4.5,0 q2.3,2.4 4.5,0" fill="none" stroke="#d6d6d6" stroke-width="1.1"/></svg>
<div class="t" style="left:825px;top:626px;width:60px;text-align:center">0</div>
<div class="a" style="left:825px;top:642px;width:54px;height:5px;background:#e0e0e0;border:1px solid #8a8a8a;border-top:none;border-bottom:2px solid #8a8a8a;"></div>
<div class="a" style="left:851px;top:643px;width:3px;height:3px;background:#111;"></div>
<svg style="left:26px;top:655px" width="7" height="11"><path d="M0.8,0.8 L5.8,5.5 L0.8,10.2" fill="none" stroke="#3a3a3a" stroke-width="1.2"/></svg>
<svg style="left:40px;top:654px" width="15" height="15"><path d="M6.3,4.6 L7.1,1.4 M8.2,6.2 L12.4,1.8 M9.6,8.2 L12.8,7.4" stroke="#2e2e2e" stroke-width="1.7" stroke-linecap="round"/><ellipse cx="6" cy="8" rx="6.1" ry="2.9" transform="rotate(39 6 8)" fill="#2e2e2e"/><ellipse cx="5.7" cy="8.1" rx="2.3" ry="1.0" transform="rotate(39 5.7 8.1)" fill="#d0d0d0"/><path d="M1.1,9.4 Q1.8,11.9 4.5,12.9" fill="none" stroke="#2e2e2e" stroke-width="1.4"/></svg>
<div class="a" style="left:58px;top:653px;width:6px;height:14px;background:#b2b2b2;border:1px solid #707070;"></div>
<div class="t" style="left:68px;top:652px;">Positioning_Demo</div>
<div class="t" style="left:254px;top:652px;">Windows</div>
<div class="t" style="left:347px;top:652px;">183 Bytes</div>
<div class="t" style="left:437px;top:652px;">-</div>
<div class="t" style="left:505px;top:652px;">159 Bytes</div>
<div class="t" style="left:621px;top:652px;">183 Bytes</div>
<div class="a" style="left:708px;top:647px;width:5px;height:24px;background:#cacaca;border:1px solid #8a8a8a;border-radius:2px;"></div>
<div class="a" style="left:708px;top:658px;width:5px;height:2px;background:#8a8a8a;"></div>
<div class="a" style="left:715px;top:647px;width:7px;height:24px;background:#cacaca;border:1px solid #8a8a8a;border-radius:2px;"></div>
<svg style="left:715px;top:647px" width="7" height="24"><path d="M6,5.5 L3.5,5.5 L3.5,18.5 L1,18.5" fill="none" stroke="#8a8a8a" stroke-width="1.1"/></svg>
<div class="a" style="left:723px;top:647px;width:7px;height:24px;background:#cacaca;border:1px solid #8a8a8a;border-radius:3px;"></div>
<div class="a" style="left:725px;top:650px;width:3px;height:2px;background:#7a7a7a;"></div>
<div class="a" style="left:725px;top:657px;width:3px;height:1px;background:#8a8a8a;"></div>
<div class="a" style="left:725px;top:664px;width:3px;height:1px;background:#8a8a8a;"></div>
<div class="a" style="left:730px;top:647px;width:1px;height:24px;background:#e4e4e4;"></div>
<div class="a" style="left:731px;top:647px;width:61px;height:19px;background:#dcdcdc;border:1px solid #9a9a9a;border-bottom:2px solid #8a8a8a;border-top:none;"></div>
<svg style="left:734px;top:652px" width="9" height="9"><circle cx="4.5" cy="4.5" r="4.2" fill="#a9a9a9"/><path d="M0,4.8 q2.2,-2.4 4.5,0 q2.3,2.4 4.5,0" fill="none" stroke="#d6d6d6" stroke-width="1.1"/></svg>
<div class="t" style="left:734px;top:650px;width:60px;text-align:center">0</div>
<div class="a" style="left:731px;top:666px;width:61px;height:5px;background:#e0e0e0;border:1px solid #8a8a8a;border-top:none;border-bottom:2px solid #8a8a8a;"></div>
<div class="a" style="left:769px;top:667px;width:3px;height:3px;background:#111;"></div>
<div class="a" style="left:802px;top:647px;width:5px;height:24px;background:#cacaca;border:1px solid #8a8a8a;border-radius:2px;"></div>
<div class="a" style="left:802px;top:658px;width:5px;height:2px;background:#8a8a8a;"></div>
<div class="a" style="left:809px;top:647px;width:7px;height:24px;background:#cacaca;border:1px solid #8a8a8a;border-radius:2px;"></div>
<svg style="left:809px;top:647px" width="7" height="24"><path d="M6,5.5 L3.5,5.5 L3.5,18.5 L1,18.5" fill="none" stroke="#8a8a8a" stroke-width="1.1"/></svg>
<div class="a" style="left:817px;top:647px;width:7px;height:24px;background:#cacaca;border:1px solid #8a8a8a;border-radius:3px;"></div>
<div class="a" style="left:819px;top:650px;width:3px;height:2px;background:#7a7a7a;"></div>
<div class="a" style="left:819px;top:657px;width:3px;height:1px;background:#8a8a8a;"></div>
<div class="a" style="left:819px;top:664px;width:3px;height:1px;background:#8a8a8a;"></div>
<div class="a" style="left:824px;top:647px;width:1px;height:24px;background:#e4e4e4;"></div>
<div class="a" style="left:825px;top:647px;width:54px;height:19px;background:#dcdcdc;border:1px solid #9a9a9a;border-bottom:2px solid #8a8a8a;border-top:none;"></div>
<svg style="left:828px;top:652px" width="9" height="9"><circle cx="4.5" cy="4.5" r="4.2" fill="#a9a9a9"/><path d="M0,4.8 q2.2,-2.4 4.5,0 q2.3,2.4 4.5,0" fill="none" stroke="#d6d6d6" stroke-width="1.1"/></svg>
<div class="t" style="left:825px;top:650px;width:60px;text-align:center">0</div>
<div class="a" style="left:825px;top:666px;width:54px;height:5px;background:#e0e0e0;border:1px solid #8a8a8a;border-top:none;border-bottom:2px solid #8a8a8a;"></div>
<div class="a" style="left:851px;top:667px;width:3px;height:3px;background:#111;"></div>
<div class="a" style="left:898px;top:531px;width:4px;height:169px;background:#b0b0b0;"></div>
<div class="a" style="left:883px;top:530px;width:15px;height:15px;background:#c9c9c9;border:1px solid #bdbdbd;box-shadow:inset 0 0 0 1px #8a8a8a;"></div>
<svg style="left:885px;top:532px" width="11" height="11"><defs><radialGradient id="mg"><stop offset="0" stop-color="#d8d8d8"/><stop offset="1" stop-color="#8a8a8a"/></radialGradient></defs><circle cx="4.7" cy="4.7" r="3.3" fill="url(#mg)" stroke="#111" stroke-width="1.5"/><path d="M7,7 L9.4,9.2" stroke="#111" stroke-width="2" stroke-linecap="round"/></svg>
<div class="a" style="left:884px;top:546px;width:14px;height:140px;background:linear-gradient(90deg,#cfcfcf,#bcbcbc);border-left:1px solid #999;border-bottom:1px solid #999;"></div>
<svg style="left:887px;top:549px" width="8" height="7"><polygon points="4,0 8,7 0,7" fill="#6a6a6a"/></svg>
<svg style="left:887px;top:674px" width="8" height="7"><polygon points="0,0 8,0 4,7" fill="#6a6a6a"/></svg>
<div class="a" style="left:18px;top:686px;width:866px;height:14px;background:linear-gradient(#c7c7c7,#bdbdbd);border-top:1px solid #999;"></div>
<svg style="left:22px;top:690px" width="7" height="8"><polygon points="7,0 7,8 0,4" fill="#6a6a6a"/></svg>
<svg style="left:871px;top:690px" width="7" height="8"><polygon points="0,0 0,8 7,4" fill="#6a6a6a"/></svg>
<div class="a" style="left:33px;top:689px;width:628px;height:9px;background:#8c8c8c;border-radius:5px;"></div>
<div class="a" style="left:884px;top:686px;width:17px;height:14px;background:#c3c3c3;"></div>
<div class="t" style="left:22px;top:706px;">5 object(s) total</div>
<div class="t" style="left:22px;top:723px;">0 object(s) selected</div>
<div class="btn" style="left:773px;top:711px;width:126px;height:26px;"></div>
<div class="t" style="left:788px;top:718px;">Copy to Clipboard</div>
<div class="ring" style="left:12px;top:24px;width:896px;height:143px;"></div>
<div class="ring" style="left:12px;top:171px;width:239px;height:330px;"></div>
<div class="ring" style="left:256px;top:172px;width:652px;height:329px;"></div>
<div class="ring" style="left:10px;top:505px;width:898px;height:202px;"></div>
<div class="num" style="left:435px;top:71px">1</div>
<div class="num" style="left:106px;top:309px">2</div>
<div class="num" style="left:557px;top:311px">3</div>
<div class="num" style="left:432px;top:581px">4</div>
</body></html>
